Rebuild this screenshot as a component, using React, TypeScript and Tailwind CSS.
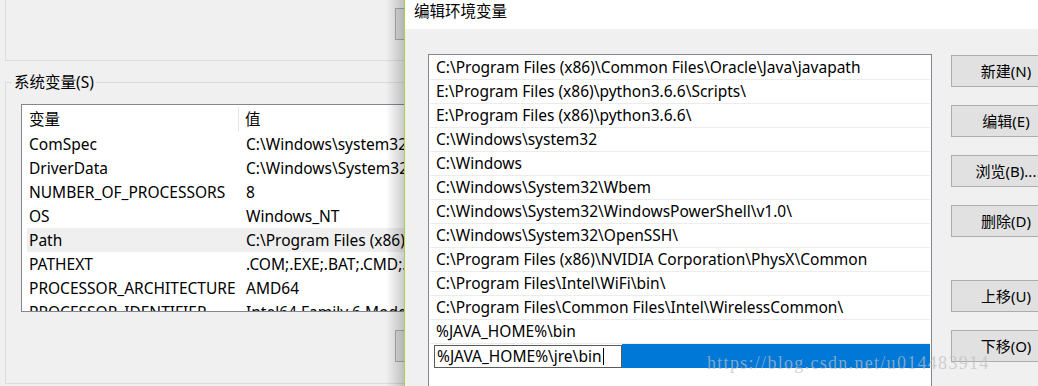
import React from "react";

const sysVars: [string, string][] = [
  ["ComSpec", "C:\\Windows\\system32\\cmd.exe"],
  ["DriverData", "C:\\Windows\\System32\\Drivers\\DriverData"],
  ["NUMBER_OF_PROCESSORS", "8"],
  ["OS", "Windows_NT"],
  ["Path", "C:\\Program Files (x86)\\Common Files\\Oracle"],
  ["PATHEXT", ".COM;.EXE;.BAT;.CMD;.VBS;.VBE"],
  ["PROCESSOR_ARCHITECTURE", "AMD64"],
  ["PROCESSOR_IDENTIFIER", "Intel64 Family 6 Model 158"],
];

const paths = [
  "C:\\Program Files (x86)\\Common Files\\Oracle\\Java\\javapath",
  "E:\\Program Files (x86)\\python3.6.6\\Scripts\\",
  "E:\\Program Files (x86)\\python3.6.6\\",
  "C:\\Windows\\system32",
  "C:\\Windows",
  "C:\\Windows\\System32\\Wbem",
  "C:\\Windows\\System32\\WindowsPowerShell\\v1.0\\",
  "C:\\Windows\\System32\\OpenSSH\\",
  "C:\\Program Files (x86)\\NVIDIA Corporation\\PhysX\\Common",
  "C:\\Program Files\\Intel\\WiFi\\bin\\",
  "C:\\Program Files\\Common Files\\Intel\\WirelessCommon\\",
  "%JAVA_HOME%\\bin",
];

function WinButton({ label, className = "" }: { label: string; className?: string }) {
  return (
    <div
      className={`flex h-[32px] w-[110px] shrink-0 items-center justify-center border border-[#adadad] bg-[#e1e1e1] text-[15px] text-black ${className}`}
    >
      {label}
    </div>
  );
}

function EnvVarsWindow() {
  return (
    <div className="relative h-full w-[404px] shrink-0 overflow-hidden bg-[#f0f0f0]">
      <div className="w-[480px]">
        {/* user variables group (bottom part) */}
        <div className="ml-[5px] h-[61px] border-b border-l border-[#dcdcdc] pt-[8px]">
          <div className="ml-[389px] h-[32px] w-[80px] border border-[#adadad] bg-[#e1e1e1]" />
        </div>

        <fieldset className="mt-[11px] ml-[5px] h-[312px] border border-r-0 border-[#dcdcdc] pl-[15px]">
          <legend className="-ml-[9px] px-[2px] text-[15.5px] leading-[20px] text-black">系统变量(S)</legend>
          <div className="mt-[12px] h-[208px] overflow-hidden border border-r-0 border-[#828790] bg-white text-[15.5px] text-black">
            <div className="flex h-[27px] items-center pt-[2px]">
              <div className="flex h-full w-[217px] items-center border-r border-[#e5e5e5] pl-[7px]">变量</div>
              <div className="pl-[6px]">值</div>
            </div>
            {sysVars.map(([name, value]) => (
              <div
                key={name}
                className={`mx-[5px] flex h-[24px] items-center pt-[2px] whitespace-nowrap ${name === "Path" ? "bg-[#efefef]" : ""}`}
              >
                <div className="w-[218px] shrink-0 pl-[2px]">{name}</div>
                <div className="pl-[1px]">{value}</div>
              </div>
            ))}
          </div>
          <div className="mt-[18px] ml-[374px] h-[32px] w-[80px] border border-[#adadad] bg-[#e1e1e1]" />
        </fieldset>
      </div>
      <div className="absolute inset-y-0 right-0 w-[18px] bg-gradient-to-r from-transparent to-black/20" />
    </div>
  );
}

function EditDialog() {
  return (
    <div className="flex h-full min-w-0 flex-1 flex-col overflow-hidden border-l border-[#a9cf4a] bg-[#f0f0f0]">
      <div className="h-[29px] shrink-0 bg-white pl-[9px] text-[15.5px] leading-[22px] text-black">编辑环境变量</div>
      <div className="flex flex-1 pt-[25px] pl-[23px]">
        <div className="h-[400px] w-[504px] shrink-0 border border-[#828790] bg-white p-[1px] text-[15.5px] text-black">
          {paths.map((p) => (
            <div key={p} className="flex h-[24px] items-center border-b border-[#ececec] pt-[1px] pl-[6px] whitespace-nowrap">
              {p}
            </div>
          ))}
          <div className="flex h-[24px]">
            <div className="mt-[1px] ml-[4px] flex h-[23px] w-[188px] items-center border border-[#5a5a5a] bg-white pl-[2px] whitespace-nowrap">
              %JAVA_HOME%\jre\bin
              <span className="ml-[1px] inline-block h-[17px] w-px bg-black" />
            </div>
            <div className="h-[24px] flex-1 bg-[#0078d7]" />
          </div>
        </div>
        <div className="ml-[19px] flex flex-col pt-[1px]">
          <WinButton label="新建(N)" />
          <WinButton label="编辑(E)" className="mt-[18px]" />
          <WinButton label="浏览(B)..." className="mt-[18px]" />
          <WinButton label="删除(D)" className="mt-[18px]" />
          <WinButton label="上移(U)" className="mt-[43px]" />
          <WinButton label="下移(O)" className="mt-[18px]" />
        </div>
      </div>
    </div>
  );
}

export default function App() {
  return (
    <div className="relative flex h-[386px] w-[1038px] overflow-hidden font-['Noto_Sans','Noto_Sans_CJK_SC',sans-serif]">
      <EnvVarsWindow />
      <EditDialog />
      {/* blog watermark over the screenshot */}
      <div className="pointer-events-none absolute top-[350px] left-[707px] font-['Liberation_Serif',serif] text-[18px] tracking-[1.3px] whitespace-nowrap text-[#bebebe]/70">
        https://blog.csdn.net/u014483914
      </div>
    </div>
  );
}
